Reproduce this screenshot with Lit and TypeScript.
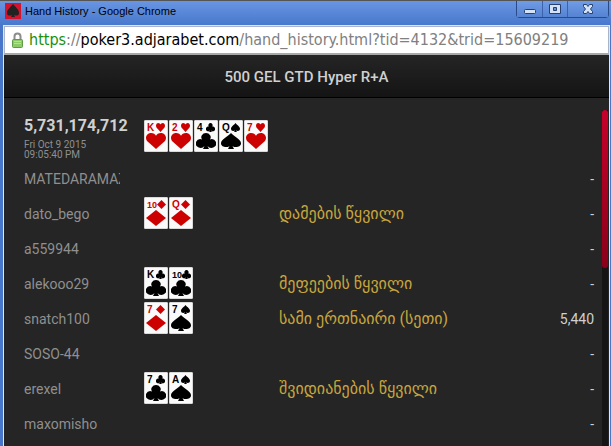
import { LitElement, html, css, svg } from "lit";
import { customElement, property } from "lit/decorators.js";

type Suit = "h" | "d" | "c" | "s";
interface Player { name: string; cards: string[]; combo: string; win: string; }

const SUITS: Record<Suit, { label: string; path: string }> = {
  h: { label: "hearts", path: "M10 18 L1 9 C-1.500 5 1 0 5 0 C7.500 0 9.300 1.500 10 3 C10.700 1.500 12.500 0 15 0 C19 0 21.500 5 19 9 Z" },
  d: { label: "diamonds", path: "M10 0 L20 9 L10 18 L0 9 Z" },
  c: { label: "clubs", path: "M10 0 A4.700 4.700 0 0 1 14 7.200 A4.800 4.800 0 1 1 11.500 14.500 L13 18 H7 L8.500 14.500 A4.800 4.800 0 1 1 6 7.200 A4.700 4.700 0 0 1 10 0 Z" },
  s: { label: "spades", path: "M10 0 C13 4 20 7 20 11.500 C20 16 14 17 11.500 14.500 L13 18 H7 L8.500 14.500 C6 17 0 16 0 11.500 C0 7 7 4 10 0 Z" },
};

const PLAYERS: Player[] = [
  { name: "MATEDARAMAZI", cards: [], combo: "", win: "-" },
  { name: "dato_bego", cards: ["10d", "Qd"], combo: "დამების წყვილი", win: "-" },
  { name: "a559944", cards: [], combo: "", win: "-" },
  { name: "alekooo29", cards: ["Kc", "10c"], combo: "მეფეების წყვილი", win: "-" },
  { name: "snatch100", cards: ["7d", "7s"], combo: "სამი ერთნაირი (სეთი)", win: "5,440" },
  { name: "SOSO-44", cards: [], combo: "", win: "-" },
  { name: "erexel", cards: ["7c", "As"], combo: "შვიდიანების წყვილი", win: "-" },
  { name: "maxomisho", cards: [], combo: "", win: "-" },
];

@customElement("playing-card")
export class PlayingCard extends LitElement {
  @property() code = "";

  static styles = css`
    :host {
      display: flex;
      flex-direction: column;
      align-items: center;
      box-sizing: border-box;
      width: 24px;
      height: 32px;
      padding: 2px 1px;
      border: 1px solid #d9d9d9;
      border-radius: 1px;
      background: #fafafa;
      color: #000;
    }
    .top {
      display: flex;
      align-self: stretch;
      justify-content: space-between;
      height: 9px;
      padding: 0 1px;
      font: bold 10px/10px "Liberation Sans", sans-serif;
    }
    .red { color: #c00; }
    .small { width: 9px; height: 9px; flex: none; }
    .large { width: 20px; height: 16px; flex: none; margin-top: 1px; }
    .ten { font-size: 9px; }
  `;

  render() {
    const suit = this.code.slice(-1) as Suit;
    const rank = this.code.slice(0, -1);
    const shape = SUITS[suit];
    if (!shape) return html``;
    const tone = suit === "h" || suit === "d" ? "red" : "";
    const icon = (size: string) => html`<svg class="${size} ${tone}" viewBox="0 0 20 18" preserveAspectRatio="none" aria-label=${shape.label}>${svg`<path fill="currentColor" d=${shape.path} />`}</svg>`;
    return html`<div class="top ${tone}"><span class=${rank.length > 1 ? "ten" : ""}>${rank}</span>${icon("small")}</div>${icon("large")}`;
  }
}

@customElement("app-root")
export class AppRoot extends LitElement {
  static styles = css`
    :host {
      display: flex;
      flex-direction: column;
      box-sizing: border-box;
      height: 100vh;
      overflow: hidden;
      background: #4876c8;
      border-top: 1px solid #555;
      font-family: Roboto, "DejaVu Sans", sans-serif;
    }
    .titlebar {
      display: flex;
      flex: none;
      height: 24px;
      padding: 0 2px 0 5px;
      background: linear-gradient(#6996e2, #4878cd);
    }
    .app-icon { width: 16px; height: 16px; margin-top: 2px; }
    .window-title {
      flex: 1;
      margin: 0 0 0 4px;
      font: 11px/21px "Liberation Sans", sans-serif;
      color: #000;
    }
    .controls {
      display: flex;
      height: 17px;
      border: 1px solid #294a87;
      border-top: 0;
      border-radius: 0 0 4px 4px;
      box-sizing: border-box;
    }
    .control {
      display: grid;
      place-items: center;
      width: 25px;
      padding: 0;
      border: 0;
      border-left: 1px solid #3b62aa;
      background: linear-gradient(#719ce5, #5583d2);
    }
    .control:first-child { border-left: 0; }
    .control.close { width: 41px; }
    .glyph { width: 14px; height: 12px; }
    .frame {
      display: flex;
      flex: 1;
      flex-direction: column;
      min-height: 0;
      margin: 0 1px 0 3px;
      border: 1px solid #e4e6ea;
      border-bottom: 0;
      background: #252525;
    }
    .address {
      display: flex;
      flex: none;
      align-items: center;
      gap: 5px;
      height: 26px;
      padding-left: 6px;
      border: 1px solid #a9b4c8;
      border-bottom: 2px solid #a8a8a8;
      background: #fff;
    }
    .lock { width: 13px; height: 17px; flex: none; }
    .url {
      font-family: "DejaVu Sans Condensed", "DejaVu Sans", sans-serif;
      font-stretch: condensed;
      font-size: 16px;
      line-height: 26px;
      color: #808080;
      white-space: nowrap;
    }
    .scheme { color: #159015; }
    .host { color: #000; }
    .heading {
      flex: none;
      margin: 0;
      border-bottom: 1px solid #000;
      background: linear-gradient(#252525, #141414);
      color: #d0d0d0;
      font-size: 15px;
      line-height: 44px;
      height: 42px;
      font-weight: 500;
      text-align: center;
    }
    .content { display: flex; flex: 1; min-height: 0; }
    .table { flex: 1; min-width: 0; height: max-content; border-collapse: collapse; table-layout: fixed; color: #8f8f8f; }
    .name-col { width: 140px; }
    .cards-col { width: 135px; }
    .win-col { width: 80px; }
    .table tr { height: 35px; }
    .table td, .table th { padding: 0; text-align: left; font-size: 14px; font-weight: 400; }
    .table .summary { height: 63px; }
    .summary .hand { padding: 18px 0 0 20px; vertical-align: top; white-space: nowrap; }
    .table .board { vertical-align: top; padding-top: 22px; }
    .number { font-size: 16px; line-height: 20px; font-weight: 700; color: #d0d0d0; }
    .date { margin-top: 4px; font-size: 10px; line-height: 10px; }
    .table .name { padding-left: 20px; }
    .nick { width: 96px; overflow: hidden; white-space: nowrap; }
    .cards { display: flex; gap: 1px; padding-bottom: 2px; }
    .table .combo { color: #c9a63d; font-size: 16px; line-height: 20px; white-space: nowrap; }
    .table .win { padding-right: 8px; text-align: right; color: #d0d0d0; }
    .track { width: 6px; flex: none; margin: 12px 1px 0 0; background: #151515; }
    .thumb { height: 158px; border-radius: 3px; background: linear-gradient(#c8002a, #8a001a); }
  `;

  private cards(codes: string[]) {
    return html`<div class="cards">${codes.map((c) => html`<playing-card code=${c}></playing-card>`)}</div>`;
  }

  render() {
    return html`
      <header class="titlebar">
        <svg class="app-icon" viewBox="0 0 16 16" aria-hidden="true">
          <rect width="16" height="16" fill="#d3142f" />
          <path fill="#222" d="M8 1 C10 4 14 6 14 10 C14 13 11 13 9 12 L10 14 H6 L7 12 C5 13 2 13 2 10 C2 6 6 4 8 1 Z" />
        </svg>
        <p class="window-title">Hand History - Google Chrome</p>
        <div class="controls">
          <button class="control" aria-label="Minimize">
            <svg class="glyph" viewBox="0 0 14 12"><rect x="1.500" y="6.500" width="11" height="4" rx="1" fill="#d5e1f5" stroke="#26406f" /></svg>
          </button>
          <button class="control" aria-label="Maximize">
            <svg class="glyph" viewBox="0 0 14 12"><path d="M1.500 1.500h11v9h-11z M5.500 4.500h3v3h-3z" fill="#d5e1f5" fill-rule="evenodd" stroke="#26406f" /></svg>
          </button>
          <button class="control close" aria-label="Close">
            <svg class="glyph" viewBox="0 0 14 12"><path d="M2.500 1.500h3l1.500 2 1.500-2h3v2l-2 2.500 2 2.500v2h-3l-1.500-2-1.500 2h-3v-2l2-2.500-2-2.500z" fill="#d5e1f5" stroke="#26406f" /></svg>
          </button>
        </div>
      </header>
      <div class="frame">
        <div class="address">
          <svg class="lock" viewBox="0 0 13 17" aria-label="Secure">
            <path d="M3.500 8 V4.500 C3.500 .5 9.500 .5 9.500 4.500 V8" fill="none" stroke="#8c8c8c" stroke-width="2" />
            <rect x="1.500" y="7.500" width="10" height="8" rx="1" fill="#8ccb66" stroke="#5f9a48" />
            <path d="M3 9.500h7M3 11.500h7" stroke="#b3e09a" />
          </svg>
          <div class="url"><span class="scheme">https</span>://<span class="host">poker3.adjarabet.com</span>/hand_history.html?tid=4132&amp;trid=15609219</div>
        </div>
        <h1 class="heading">500 GEL GTD Hyper R+A</h1>
        <main class="content">
          <table class="table">
            <colgroup><col class="name-col" /><col class="cards-col" /><col /><col class="win-col" /></colgroup>
            <tbody>
              <tr class="summary">
                <th class="hand" scope="row">
                  <div class="number">5,731,174,712</div>
                  <div class="date">Fri Oct 9 2015<br />09:05:40 PM</div>
                </th>
                <td class="board" colspan="3">${this.cards(["Kh", "2h", "4c", "Qs", "7h"])}</td>
              </tr>
              ${PLAYERS.map((p) => html`<tr>
                <th class="name" scope="row"><div class="nick">${p.name}</div></th>
                <td>${this.cards(p.cards)}</td>
                <td class="combo">${p.combo}</td>
                <td class="win">${p.win}</td>
              </tr>`)}
            </tbody>
          </table>
          <div class="track"><div class="thumb"></div></div>
        </main>
      </div>
    `;
  }
}
